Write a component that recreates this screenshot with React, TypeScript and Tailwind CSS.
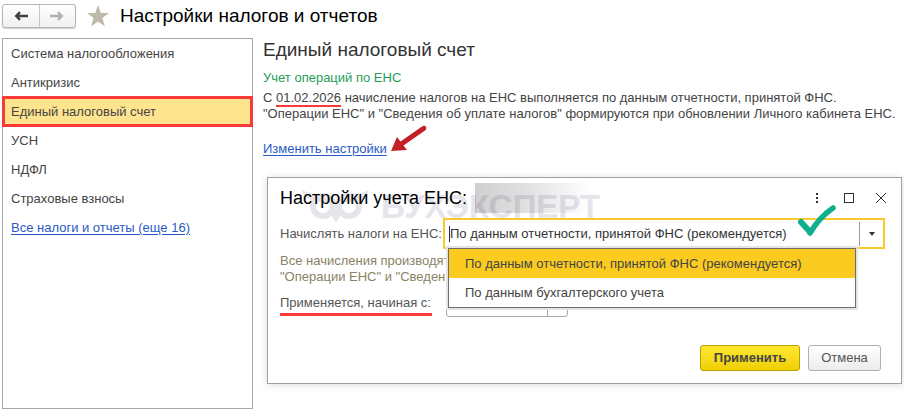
import React, { useState } from "react";

const sections = [
    "Система налогообложения",
    "Антикризис",
    "Единый налоговый счет",
    "УСН",
    "НДФЛ",
    "Страховые взносы",
];

const methods = [
    "По данным отчетности, принятой ФНС (рекомендуется)",
    "По данным бухгалтерского учета",
];

const Arrow = ({ className }: { className: string }) => (
    <svg viewBox="0 0 14 10" className={className} fill="none" stroke="currentColor" strokeWidth="2.4">
        <path d="M14 5H2.5M6 1.2L2.2 5 6 8.8" />
    </svg>
);

const Header = () => (
    <header className="flex h-8 items-center">
        <div className="flex h-6 w-[74px] rounded-[3px] border border-[#b4b4b4] bg-linear-to-b from-white to-[#f0f0f0] shadow-[0_1px_1px_#d0d0d0]">
            <button type="button" aria-label="Назад" className="flex flex-1 items-center justify-center border-r border-[#c8c8c8] text-[#404040]">
                <Arrow className="h-[10px] w-[14px]" />
            </button>
            <button type="button" aria-label="Вперед" className="flex flex-1 items-center justify-center text-[#b0b0b0]">
                <Arrow className="h-[10px] w-[14px] rotate-180" />
            </button>
        </div>
        <button type="button" aria-label="В избранное" className="ml-[11px]">
            <svg viewBox="0 0 22 22" className="size-[22px]" fill="#bdb9ab">
                <path d="M11 0l2.7 7.9 8.3.2-6.6 5 2.4 8.2L11 16.4l-6.8 4.9 2.4-8.2-6.6-5 8.3-.2z" />
            </svg>
        </button>
        <h1 className="ml-[11px] text-[19px] whitespace-nowrap text-black">Настройки налогов и отчетов</h1>
    </header>
);

const Sidebar = () => {
    const [active, setActive] = useState(2);
    return (
        <nav className="w-[251px] shrink-0 border border-[#a8a8a8]">
            {sections.map((name, i) => (
                <button
                    type="button"
                    key={name}
                    onClick={() => setActive(i)}
                    className={
                        i === active
                            ? "block h-[29px] w-full bg-[#ffe48f] px-2 text-left outline-3 -outline-offset-2 outline-[#f93a37]"
                            : "block h-[29px] w-full px-2 text-left"
                    }
                >
                    {name}
                </button>
            ))}
            <a href="#all" className="flex h-[29px] items-center px-2 text-[#2a5bc4] underline underline-offset-2">
                Все налоги и отчеты (еще 16)
            </a>
        </nav>
    );
};

const Watermark = () => (
    <div aria-hidden="true" className="pointer-events-none absolute top-3 left-[34px] flex items-center gap-3 text-[#e6e5ec]">
        <svg viewBox="0 0 67 33" className="h-[33px] w-[67px]" fill="none" stroke="currentColor">
            <path d="M0 0c7 4 14 4 22 4 5 0 9 3 12 6 3-3 7-6 12-6 8 0 14 0 21-4-2 7-7 11-14 12H14C7 11 2 7 0 0z" fill="currentColor" stroke="none" />
            <circle cx="21" cy="16" r="10" strokeWidth="6" />
            <circle cx="47" cy="16" r="10" strokeWidth="6" />
            <path d="M27 20h14l-7 13z" fill="currentColor" stroke="none" />
        </svg>
        <span className="text-[33px] leading-8 font-bold">БУХЭКСПЕРТ</span>
    </div>
);

const MethodField = () => {
    const [open, setOpen] = useState(true);
    const [method, setMethod] = useState(methods[0]);
    return (
        <div className="relative min-w-0 flex-1">
            <div className="flex h-[31px] items-center border-2 border-[#f9ca2a] bg-white">
                <span className="ml-1 h-4 w-px bg-[#1c2a7a]" />
                <select
                    id="method"
                    value={method}
                    onMouseDown={(e) => {
                        e.preventDefault();
                        setOpen(!open);
                    }}
                    onChange={(e) => setMethod(e.target.value)}
                    className="min-w-0 flex-1 appearance-none text-[#333] outline-none"
                >
                    {methods.map((m) => (
                        <option key={m}>{m}</option>
                    ))}
                </select>
                <button
                    type="button"
                    aria-label="Открыть список"
                    onClick={() => setOpen(!open)}
                    className="flex h-6 w-6 items-center justify-center border-l border-[#999]"
                >
                    <svg viewBox="0 0 6 4" className="h-1 w-[6px]" fill="#333">
                        <path d="M0 0h6L3 4z" />
                    </svg>
                </button>
            </div>
            {open && (
                <ul role="listbox" className="absolute top-[30px] right-[29px] left-[5px] z-10 border border-[#6e6e6e] bg-white shadow-[0_0_0_2px_#e4e4e4]">
                    {methods.map((m) => (
                        <li
                            key={m}
                            role="option"
                            aria-selected={m === method}
                            onClick={() => {
                                setMethod(m);
                                setOpen(false);
                            }}
                            className="flex h-[29px] items-center px-4 whitespace-nowrap aria-selected:bg-[#fbcb20]"
                        >
                            {m}
                        </li>
                    ))}
                </ul>
            )}
            <svg viewBox="0 0 40 34" className="pointer-events-none absolute -top-[14px] right-12 h-[34px] w-10" fill="none" stroke="#0fae8e" strokeLinecap="round" strokeLinejoin="round">
                <path d="M4 18l9 10" strokeWidth="6" />
                <path d="M13 29C19 19 27 10 36 4" strokeWidth="5.5" />
            </svg>
        </div>
    );
};

const Dialog = () => (
    <section role="dialog" aria-labelledby="dialog-title" className="relative mt-5 ml-1 border border-[#a0a0a0] bg-white px-3 pb-3 shadow-[0_1px_8px_#00000026]">
        <Watermark />
        <div className="relative flex h-10 items-center">
            <h2 id="dialog-title" className="text-[18px] whitespace-nowrap text-black">Настройки учета ЕНС:</h2>
            <div className="ml-2 h-[30px] w-[115px] bg-linear-to-r from-[#00000030] via-[#0000001c] to-transparent" />
            <div className="ml-auto flex items-center gap-4 text-[#333]">
                <button type="button" aria-label="Еще" className="flex size-4 items-center justify-center">
                    <svg viewBox="0 0 2 10" className="h-[10px] w-[2px]" fill="currentColor">
                        <path d="M0 0h2v2H0zM0 4h2v2H0zM0 8h2v2H0z" />
                    </svg>
                </button>
                <button type="button" aria-label="Развернуть" className="flex size-4 items-center justify-center">
                    <span className="size-[10px] border border-[#333]" />
                </button>
                <button type="button" aria-label="Закрыть" className="flex size-4 items-center justify-center">
                    <svg viewBox="0 0 10 10" className="size-[10px]" fill="none" stroke="currentColor">
                        <path d="M0 0l10 10M10 0L0 10" />
                    </svg>
                </button>
            </div>
        </div>
        <form onSubmit={(e) => e.preventDefault()} className="relative">
            <div className="mr-1 flex items-center">
                <label htmlFor="method" className="w-[163px] shrink-0 whitespace-nowrap text-[#555]">Начислять налоги на ЕНС:</label>
                <MethodField />
            </div>
            <p className="mt-1 whitespace-nowrap text-[#8a8265]">
                Все начисления производятся
                <br />
                "Операции ЕНС" и "Сведения
            </p>
            <div className="mt-2 flex items-start">
                <label htmlFor="since" className="w-[152px] border-b-3 border-[#f93a37] leading-5 whitespace-nowrap text-[#555]">
                    Применяется, начиная с:
                </label>
                <div className="ml-[14px] flex h-6 w-[122px] rounded-[3px] border border-[#a8a8a8]">
                    <input id="since" className="min-w-0 flex-1 outline-none" />
                    <button type="button" aria-label="Выбрать дату" className="w-5 border-l border-[#a8a8a8]" />
                </div>
            </div>
            <div className="mt-7 mr-2 flex justify-end gap-2">
                <button type="submit" className="h-[26px] w-[100px] rounded-[3px] border border-[#b8a000] bg-linear-to-b from-[#ffe82e] to-[#efd000] font-bold text-[#444]">
                    Применить
                </button>
                <button type="button" className="h-[26px] w-[73px] rounded-[3px] border border-[#b0b0b0] bg-linear-to-b from-white to-[#ececec] text-[#555]">
                    Отмена
                </button>
            </div>
        </form>
    </section>
);

export default function App() {
    return (
        <div className="flex min-h-screen flex-col bg-white px-[2px] pb-[3px] font-['Liberation_Sans',Arial,sans-serif] text-[13px] leading-4 text-[#444]">
            <Header />
            <div className="mt-[6px] flex flex-1">
                <Sidebar />
                <main className="ml-[10px] min-w-0 flex-1">
                    <h2 className="text-[19px] leading-6 text-[#333]">Единый налоговый счет</h2>
                    <p className="mt-2 text-[#1f9d57]">Учет операций по ЕНС</p>
                    <p className="mt-1">
                        С <span className="border-b-2 border-[#f93a37]">01.02.2026</span> начисление налогов на ЕНС выполняется по данным отчетности, принятой ФНС.
                        <br />
                        "Операции ЕНС" и "Сведения об уплате налогов" формируются при обновлении Личного кабинета ЕНС.
                    </p>
                    <div className="mt-[3px] flex items-start gap-1">
                        <a href="#settings" className="mt-4 text-[#2a5bc4] underline underline-offset-2">Изменить настройки</a>
                        <svg viewBox="0 0 36 28" className="h-7 w-9" fill="#c22026">
                            <path d="M0 26l6-14 3.500 4.500L31 1.500q3-1.500 4 .5t-1 3.500L12.500 20.500 16 25z" />
                        </svg>
                    </div>
                    <Dialog />
                </main>
            </div>
        </div>
    );
}
